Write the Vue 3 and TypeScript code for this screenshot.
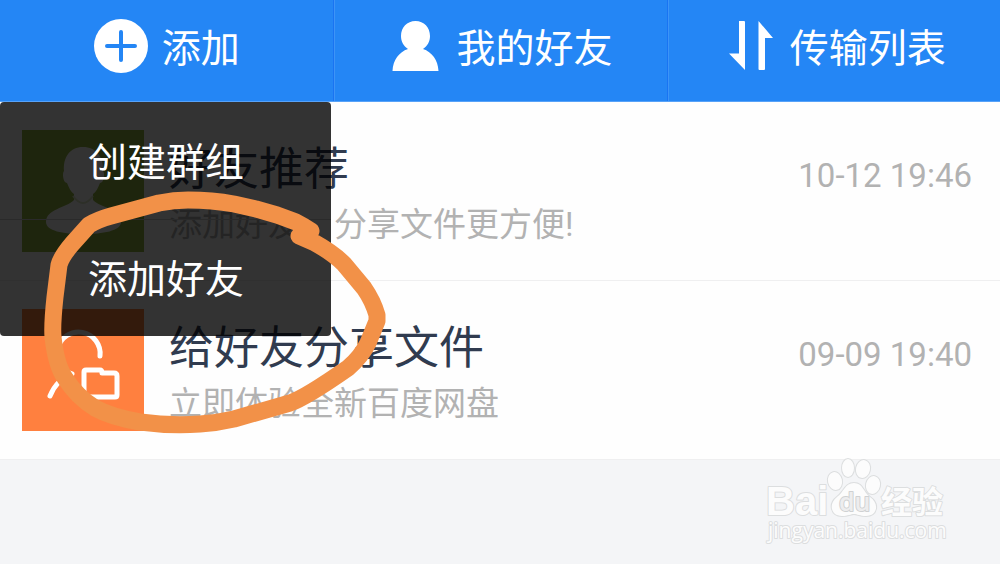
<script setup lang="ts">
import { ref } from 'vue'

interface Message {
  id: number
  kind: 'friend' | 'share'
  title: string
  summary: string
  time: string
}

const menuOpen = ref(true)
const menuItems: string[] = ['创建群组', '添加好友']
const messages: Message[] = [
  { id: 1, kind: 'friend', title: '好友推荐', summary: '添加好友，分享文件更方便!', time: '10-12 19:46' },
  { id: 2, kind: 'share', title: '给好友分享文件', summary: '立即体验全新百度网盘', time: '09-09 19:40' },
]
</script>

<template>
  <div class="page">
    <header class="toolbar">
      <div class="cell">
        <button class="tab" type="button" :aria-expanded="menuOpen" @click="menuOpen = !menuOpen">
          <svg class="tab-icon" viewBox="0 0 56 56" aria-hidden="true">
            <circle cx="27" cy="28" r="27" fill="#fff" />
            <path d="M27 14V42M13 28H41" stroke="#2486f5" stroke-width="4" stroke-linecap="round" />
          </svg>
          <span>添加</span>
        </button>
        <div v-if="menuOpen" class="menu">
          <button v-for="item in menuItems" :key="item" class="menu-item" type="button">{{ item }}</button>
        </div>
      </div>
      <div class="cell">
        <button class="tab" type="button">
          <svg class="tab-icon" viewBox="0 0 56 56" aria-hidden="true">
            <path
              d="M27.500 3C19 3 13 9.500 13 18c0 5.500 2.500 10 7 13C11 34 5 42 4.500 53H50.500C50 42 44 34 35 31c4.500-3 7-7.500 7-13C42 9.500 36 3 27.500 3Z"
              fill="#fff"
            />
          </svg>
          <span>我的好友</span>
        </button>
      </div>
      <div class="cell">
        <button class="tab" type="button">
          <svg class="tab-icon" viewBox="0 0 56 56" aria-hidden="true">
            <path d="M17 3h5q1 0 1 1V52L7 35.500H17Z" fill="#fff" />
            <path d="M36.500 3 51 20H43V51q0 1-1 1H37.500q-1 0-1-1Z" fill="#fff" />
          </svg>
          <span>传输列表</span>
        </button>
      </div>
    </header>

    <main>
      <ul class="list">
        <li v-for="message in messages" :key="message.id" class="row">
          <svg v-if="message.kind === 'friend'" class="avatar" viewBox="0 0 122 122" aria-hidden="true">
            <rect width="122" height="122" fill="#96b941" />
            <path
              d="M61 17C48 17 41 27 42 41c-2 2-1 12 3 12 2 5 4 9 7 11v6C44 78 24 79 24 92c0 9 17 12 37 12s38-3 38-12c0-13-20-14-28-22v-6c3-2 5-6 7-11 4 0 5-10 3-12C82 27 74 17 61 17Z"
              fill="#fff"
            />
            <path d="M51 66Q61 80 71 66" fill="none" stroke="#dfe8c5" stroke-width="2" />
          </svg>
          <svg v-else class="avatar" viewBox="0 0 122 122" aria-hidden="true">
            <rect width="122" height="122" fill="#ff803f" />
            <g fill="none" stroke="#fff" stroke-width="5" stroke-linecap="round" stroke-linejoin="round">
              <path d="M78 47A21.500 21.500 0 1 0 50 65Q35 70 28 87" />
              <path d="M64 61H78Q80 61 80 64H92Q95 64 95 67V86Q95 88 93 88H64Q62 88 62 86V63Q62 61 64 61Z" />
            </g>
          </svg>
          <div class="content">
            <h2>{{ message.title }}</h2>
            <p>{{ message.summary }}</p>
          </div>
          <time>{{ message.time }}</time>
        </li>
      </ul>
    </main>

    <svg class="marker" viewBox="0 0 400 450" aria-hidden="true">
      <path
        d="M311 231Q304 226 296 222L277 215 256 209 234 204Q212 200 188 200 174 200 159 203L111 216Q97 220 89 225L72 244Q61 257 59 265L55 297Q52 325 53 337 56 365 65 378 77 397 95 408 111 417 140 422 170 426 200 424 217 423 234 419L290 403Q305 398 348 368 361 357 368 343L377 321V315Q373 301 364 288L344 264Q333 253 315 243L299 236Z"
      />
    </svg>

    <svg class="watermark" viewBox="0 0 190 92" role="img" aria-label="Baidu 经验">
      <g class="outlined">
        <text class="brand" x="2" y="59">Bai</text>
        <ellipse cx="71" cy="25" rx="7" ry="9" transform="rotate(-12 71 25)" />
        <ellipse cx="84" cy="12" rx="6" ry="9" />
        <ellipse cx="99" cy="13" rx="7" ry="9" transform="rotate(12 99 13)" />
        <ellipse cx="109" cy="29" rx="7" ry="9" transform="rotate(12 109 29)" />
        <path d="M90 27C81 27 80 36 73 41 64 48 67 60 78 60 84 60 87 58 90 58s6 2 12 2C113 60 116 48 106 41 99 36 99 27 90 27Z" />
        <text class="du" x="75" y="55">du</text>
        <text class="sub-brand" x="117" y="57">经验</text>
        <text class="address" x="4" y="82">jingyan.baidu.com</text>
      </g>
    </svg>
  </div>
</template>

<style>
body {
  margin: 0;
  background: #f4f5f7;
}
</style>

<style scoped>
.page {
  position: relative;
  min-height: 100vh;
  overflow: hidden;
  background: #f4f5f7;
  font-family: Roboto, "Noto Sans CJK SC", sans-serif;
}

.toolbar {
  display: grid;
  grid-template-columns: repeat(3, 1fr);
  background: #2486f5;
  border-bottom: 1px solid #57a2f8;
}

.cell {
  position: relative;
}

.cell + .cell {
  border-left: 1px solid #1a74f2;
  box-shadow: inset 1px 0 #3d94f7;
}

.tab,
.menu-item {
  margin: 0;
  border: 0;
  background: none;
  color: #fff;
  font: inherit;
  font-size: 39px;
  line-height: 56px;
  cursor: pointer;
}

.tab {
  display: flex;
  align-items: flex-start;
  justify-content: center;
  gap: 12px;
  width: 100%;
  padding: 18px 0 24px;
  white-space: nowrap;
}

.tab span {
  padding-top: 3px;
}

.tab-icon {
  flex: none;
  width: 56px;
  height: 56px;
}

.menu {
  position: absolute;
  z-index: 1;
  top: 102px;
  left: 0;
  right: 2px;
  background: rgba(0, 0, 0, 0.8);
  border-radius: 4px;
}

.menu-item {
  display: block;
  width: 100%;
  padding: 33px 0 28px 88px;
  text-align: left;
}

.menu-item + .menu-item {
  box-shadow: inset 0 1px #2a2a2a;
}

.list {
  margin: 0;
  padding: 0;
  list-style: none;
  background: #fefefe;
}

.row {
  display: flex;
  gap: 25px;
  padding: 28px 28px 28px 22px;
  border-bottom: 1px solid #efeff0;
}

.avatar {
  flex: none;
  width: 122px;
  height: 122px;
}

.content {
  flex: 1;
  min-width: 0;
}

h2,
p {
  margin: 0;
  font-weight: 400;
  white-space: nowrap;
}

h2 {
  padding-top: 10px;
  color: #303b4f;
  font-size: 45px;
  line-height: 60px;
}

p {
  color: #b2b2b2;
  font-size: 33px;
  line-height: 50px;
}

time {
  padding-top: 26px;
  color: #b2b2b2;
  font-size: 33px;
  line-height: 40px;
  white-space: nowrap;
}

.marker {
  position: absolute;
  z-index: 2;
  top: 0;
  left: 0;
  width: 400px;
  height: 450px;
  fill: none;
  stroke: #f29148;
  stroke-width: 17px;
  stroke-linecap: round;
  stroke-linejoin: round;
  pointer-events: none;
}

.watermark {
  position: absolute;
  right: 46px;
  bottom: 16px;
  width: 190px;
  height: 92px;
}

.outlined {
  fill: #fcfcfc;
  stroke: #dcdedf;
  stroke-width: 2px;
  stroke-linejoin: round;
  paint-order: stroke;
  font-family: "Open Sans", "Noto Sans CJK SC", sans-serif;
}

.brand {
  font-family: "Liberation Sans", sans-serif;
  font-size: 40px;
  font-weight: 700;
}

.du {
  fill: #ededee;
  stroke: #cfd1d2;
  font-size: 25px;
  font-weight: 600;
}

.sub-brand {
  font-size: 31px;
  font-weight: 700;
}

.address {
  font-size: 21px;
}
</style>
